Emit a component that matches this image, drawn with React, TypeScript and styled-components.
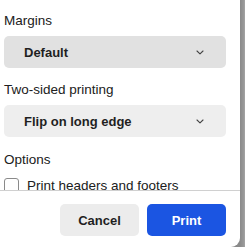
import React from "react";
import styled, { createGlobalStyle } from "styled-components";

const Global = createGlobalStyle`
  html, body { margin: 0; padding: 0; background: #ffffff; }
  body { font-family: "Liberation Sans", Arial, sans-serif; }
`;

const Backdrop = styled.div`
  width: 245px;
  height: 247px;
  background: linear-gradient(to right, #8a8a8a 0, #8a8a8a 240px, #9a9a9a 244px, #a8a8a8 245px);
  display: flex;
`;

const Panel = styled.div`
  width: 240px;
  height: 247px;
  background: #ffffff;
  border-bottom-right-radius: 9px;
  display: flex;
  flex-direction: column;
  overflow: hidden;
`;

const ScrollArea = styled.div`
  height: 190px;
  overflow: hidden;
  padding: 13px 14px 0 4px;
  box-sizing: border-box;
  display: flex;
  flex-direction: column;
`;

const Section = styled.div<{ $top: number }>`
  margin-top: ${(p) => p.$top}px;
  display: flex;
  flex-direction: column;
  gap: 7px;
`;

const Label = styled.div`
  font-size: 13.5px;
  line-height: 16px;
  color: #202020;
`;

const Select = styled.div<{ $bg: string }>`
  height: 32px;
  border-radius: 5px;
  background: ${(p) => p.$bg};
  display: flex;
  align-items: center;
  justify-content: space-between;
  padding: 0 22px 0 20px;
  font-size: 13px;
  font-weight: 700;
  color: #1f1f1f;
`;

const CheckRow = styled.label`
  display: flex;
  align-items: flex-start;
  gap: 8px;
  font-size: 13.5px;
  line-height: 16px;
  color: #202020;
  margin-top: 3px;
`;

const Box = styled.span`
  width: 13px;
  height: 13px;
  border: 1px solid #8a8a8a;
  border-radius: 3px;
  box-sizing: content-box;
  flex: none;
  background: #fff;
`;

const Footer = styled.div`
  border-top: 1px solid #d0d0d0;
  display: flex;
  justify-content: flex-end;
  gap: 8px;
  padding: 13px 14px 0 0;
`;

const Button = styled.button<{ $primary?: boolean }>`
  width: 79px;
  height: 32px;
  border: none;
  border-radius: 5px;
  font-family: "Liberation Sans", Arial, sans-serif;
  font-size: 13px;
  font-weight: 700;
  background: ${(p) => (p.$primary ? "#1b55e2" : "#ececec")};
  color: ${(p) => (p.$primary ? "#ffffff" : "#1f1f1f")};
`;

const Chevron = () => (
  <svg width="8" height="5" viewBox="0 0 8 5" fill="none">
    <path d="M1 1 L4 3.8 L7 1" stroke="#444" strokeWidth="1.1" strokeLinecap="round" strokeLinejoin="round" />
  </svg>
);

export default function App() {
  return (
    <>
      <Global />
      <Backdrop>
        <Panel>
          <ScrollArea>
            <Section $top={0}>
              <Label>Margins</Label>
              <Select $bg="#e1e1e1">
                <span>Default</span>
                <Chevron />
              </Select>
            </Section>
            <Section $top={14}>
              <Label>Two-sided printing</Label>
              <Select $bg="#eeeeee">
                <span>Flip on long edge</span>
                <Chevron />
              </Select>
            </Section>
            <Section $top={15}>
              <Label>Options</Label>
              <CheckRow>
                <Box />
                <span>Print headers and footers</span>
              </CheckRow>
            </Section>
          </ScrollArea>
          <Footer>
            <Button>Cancel</Button>
            <Button $primary>Print</Button>
          </Footer>
        </Panel>
      </Backdrop>
    </>
  );
}
